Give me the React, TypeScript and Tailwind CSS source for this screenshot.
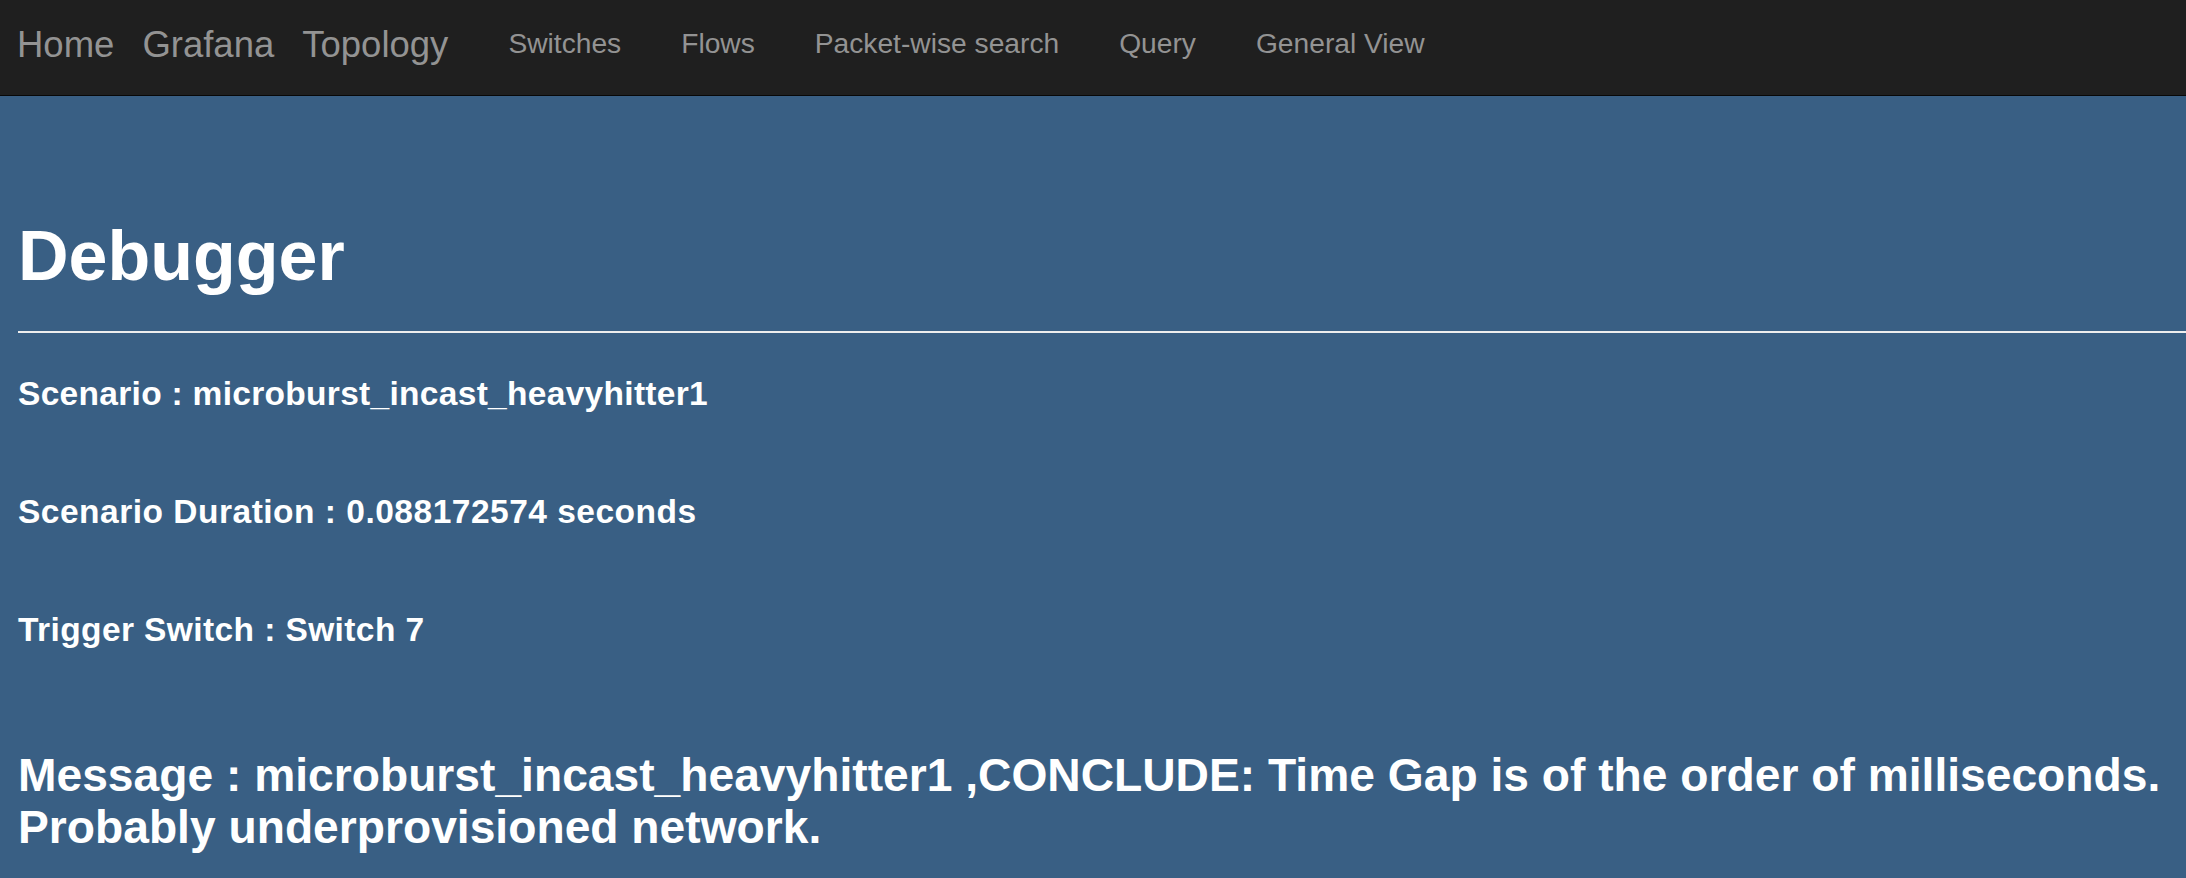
const brandLinks = ["Home", "Grafana", "Topology"];
const navLinks = ["Switches", "Flows", "Packet-wise search", "Query", "General View"];

function NavBar() {
  return (
    <nav className="h-[96px] bg-[#1f1f1f] border-b border-[#080808] flex items-center pb-[6px] pl-[17px]">
      {/* brand-size links */}
      <div className="flex items-center gap-[28px]">
        {brandLinks.map((label) => (
          <a key={label} href="#" className="text-[36.5px] leading-[36px] text-[#939393]">
            {label}
          </a>
        ))}
      </div>

      {/* regular links */}
      <ul className="flex items-center gap-[60px] ml-[60px]">
        {navLinks.map((label) => (
          <li key={label}>
            <a href="#" className="text-[28.2px] leading-[28px] text-[#939393]">
              {label}
            </a>
          </li>
        ))}
      </ul>
    </nav>
  );
}

export default function App() {
  return (
    <div className="min-h-[878px] bg-[#395f84] font-['Liberation_Sans',Arial,sans-serif]">
      <NavBar />

      <main className="pl-[18px] pt-[122px] text-white">
        <h1 className="text-[70px] leading-[1.1] font-bold">Debugger</h1>
        <hr className="mt-[36px] border-0 border-t-2 border-[#eeeeee]" />

        <div className="mt-[43px] flex flex-col gap-[81px]">
          <h4 className="text-[33.5px] leading-[1.1] font-bold tracking-[0.3px]">Scenario : microburst_incast_heavyhitter1</h4>
          <h4 className="text-[33.5px] leading-[1.1] font-bold tracking-[0.5px]">Scenario Duration : 0.088172574 seconds</h4>
          <h4 className="text-[33.5px] leading-[1.1] font-bold tracking-[0.4px]">Trigger Switch : Switch 7</h4>
        </div>

        <h3 className="mt-[100px] text-[46.2px] leading-[52px] font-bold">
          Message : microburst_incast_heavyhitter1 ,CONCLUDE: Time Gap is of the order of milliseconds. Probably underprovisioned network.
        </h3>
      </main>
    </div>
  );
}
